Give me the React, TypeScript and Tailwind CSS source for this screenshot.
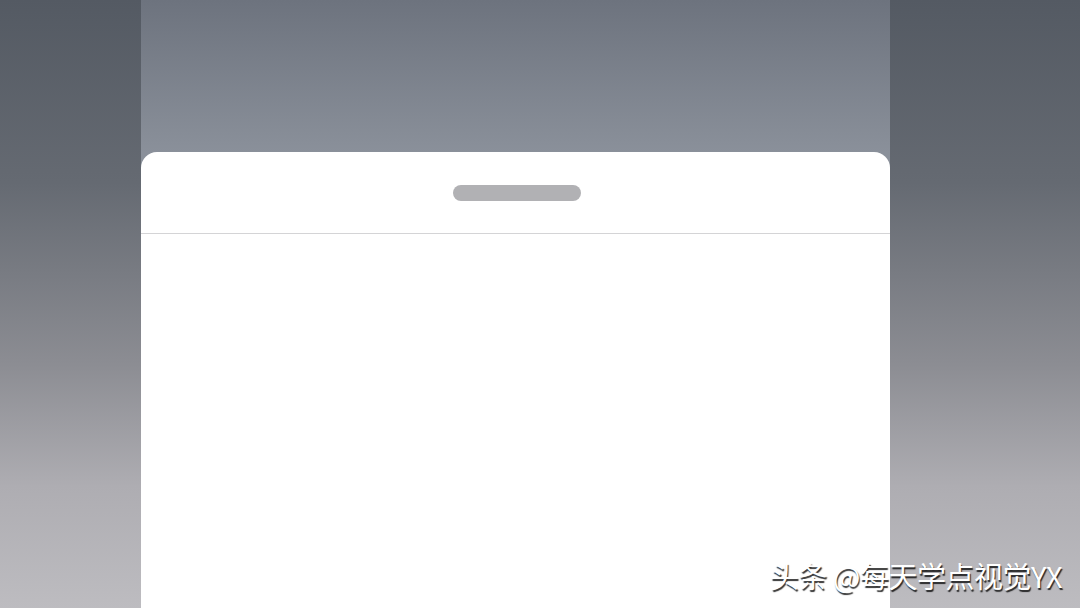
export default function App() {
  return (
    <div className="relative flex h-[608px] w-[1080px] overflow-hidden font-['Noto_Sans_CJK_SC',sans-serif]">
      {/* left side strip */}
      <div className="h-full w-[141px] bg-[linear-gradient(180deg,#545a63_0%,#656a72_30%,#8c8d93_60%,#aeadb2_80%,#bdbcc0_100%)]" />

      {/* middle: dimmed backdrop + sheet */}
      <div className="flex h-full flex-1 flex-col bg-[linear-gradient(180deg,#6d737e_0px,#8a909a_152px,#8a909a_100%)] pt-[152px]">
        <div className="flex flex-1 flex-col rounded-t-[16px] bg-white">
          <div className="flex h-[82px] items-center justify-center border-b border-[#d4d4d6] pl-[3px]">
            <div className="h-[16px] w-[128px] rounded-full bg-[#b1b1b4]" />
          </div>
          <div className="flex-1" />
        </div>
      </div>

      {/* right side strip */}
      <div className="h-full w-[190px] bg-[linear-gradient(180deg,#545a63_0%,#656a72_30%,#8c8d93_60%,#aeadb2_80%,#bdbcc0_100%)]" />

      {/* watermark */}
      <div className="absolute bottom-[18px] right-[18px] text-[29px] leading-none tracking-[-0.5px] text-white [text-shadow:1px_2px_1px_rgba(0,0,0,0.8)]">
        头条 @每天学点视觉YX
      </div>
    </div>
  );
}
